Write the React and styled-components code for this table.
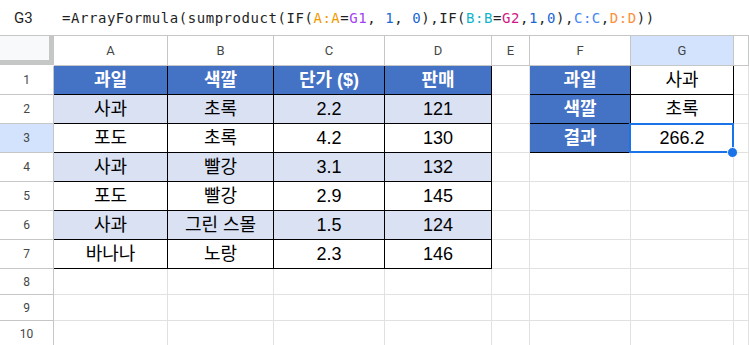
import React from 'react';
import styled, { createGlobalStyle, css } from 'styled-components';

const GlobalStyle = createGlobalStyle`
  html, body {
    margin: 0;
    padding: 0;
    background: #ffffff;
    overflow: hidden;
  }
`;

const Page = styled.div`
  width: 749px;
  height: 345px;
  overflow: hidden;
  font-family: "Liberation Sans", "Noto Sans CJK KR", Arial, sans-serif;
`;

const FormulaBar = styled.div`
  height: 35px;
  border-bottom: 1px solid #c4c7c5;
  display: flex;
  align-items: center;
  box-sizing: content-box;
`;

const NameBox = styled.div`
  width: 62px;
  padding-left: 14px;
  box-sizing: border-box;
  font-family: Roboto, "Liberation Sans", sans-serif;
  font-size: 15px;
  color: #1f1f1f;
`;

const Formula = styled.div`
  font-family: "DejaVu Sans Mono", "Liberation Mono", monospace;
  font-size: 14px;
  letter-spacing: 0.55px;
  color: #1f1f1f;
  white-space: pre;
`;

const Ref = styled.span`
  color: ${p => p.$c};
`;

const Grid = styled.div`
  display: grid;
  grid-template-columns: 54px 114px 106px 111px 107px 38px 101px 103px 1fr;
  grid-template-rows: 30px repeat(7, 29px) repeat(3, 26px);
`;

const Corner = styled.div`
  background: #f8f9fa;
  border-right: 5px solid #c4c7c5;
  border-bottom: 5px solid #c4c7c5;
  margin-bottom: 1px;
  box-sizing: border-box;
  height: 29px;
`;

const HeaderCell = styled.div`
  display: flex;
  align-items: center;
  justify-content: center;
  box-sizing: border-box;
  border-right: 1px solid #c4c7c5;
  border-bottom: 1px solid #c4c7c5;
  background: ${p => (p.$active ? '#d3e3fd' : '#ffffff')};
  font-family: Roboto, "Liberation Sans", sans-serif;
  font-size: ${p => (p.$row ? '12px' : '13px')};
  color: #444746;
`;

const Cell = styled.div`
  position: relative;
  display: flex;
  align-items: center;
  justify-content: center;
  box-sizing: border-box;
  border-right: 1px solid ${p => (p.$edgeR ? '#000000' : '#e1e1e1')};
  border-bottom: 1px solid ${p => (p.$edgeB ? '#000000' : '#e1e1e1')};
  background: ${p => p.$bg || '#ffffff'};
  font-size: 18px;
  line-height: 20px;
  color: #000000;
  white-space: nowrap;
  ${p => p.$head && css`
    color: #ffffff;
    font-weight: bold;
  `}
  ${p => p.$selected && css`
    &::after {
      content: '';
      position: absolute;
      top: -1px;
      left: -2px;
      right: -1px;
      bottom: -1px;
      border: 2px solid #1a73e8;
    }
  `}
`;

const Handle = styled.span`
  position: absolute;
  right: -5px;
  bottom: -6px;
  width: 9px;
  height: 9px;
  border-radius: 50%;
  background: #1a73e8;
  border: 1px solid #ffffff;
  z-index: 2;
`;

const BLUE = '#4472c4';
const BAND = '#d9e1f2';

const columns = ['A', 'B', 'C', 'D', 'E', 'F', 'G', ''];

const table = [
  ['과일', '색깔', '단가 ($)', '판매'],
  ['사과', '초록', '2.2', '121'],
  ['포도', '초록', '4.2', '130'],
  ['사과', '빨강', '3.1', '132'],
  ['포도', '빨강', '2.9', '145'],
  ['사과', '그린 스몰', '1.5', '124'],
  ['바나나', '노랑', '2.3', '146'],
];

const lookup = [
  ['과일', '사과'],
  ['색깔', '초록'],
  ['결과', '266.2'],
];

const App = () => {
  const rows = [];
  for (let r = 1; r <= 10; r++) {
    const data = table[r - 1];
    const look = lookup[r - 1];
    const inTable = !!data;
    const head = r === 1;
    const band = inTable && r % 2 === 0 ? BAND : undefined;

    rows.push(
      <HeaderCell key={`h${r}`} $row $active={r === 3}>{r}</HeaderCell>
    );
    for (let c = 0; c < 4; c++) {
      rows.push(
        <Cell
          key={`${r}-${c}`}
          $bg={head ? BLUE : band}
          $head={head}
          $edgeR={inTable}
          $edgeB={inTable}
        >
          {data ? data[c] : ''}
        </Cell>
      );
    }
    rows.push(<Cell key={`${r}-e`} />);
    rows.push(
      <Cell key={`${r}-f`} $bg={look ? BLUE : undefined} $head={!!look} $edgeR={!!look} $edgeB={!!look}>
        {look ? look[0] : ''}
      </Cell>
    );
    rows.push(
      <Cell key={`${r}-g`} $edgeR={!!look} $edgeB={!!look} $selected={r === 3}>
        {look ? look[1] : ''}
        {r === 3 && <Handle />}
      </Cell>
    );
    rows.push(<Cell key={`${r}-h`} />);
  }

  return (
    <Page>
      <GlobalStyle />
      <FormulaBar>
        <NameBox>G3</NameBox>
        <Formula>
          =ArrayFormula(sumproduct(IF(<Ref $c="#f29900">A:A</Ref>=<Ref $c="#a142f4">G1</Ref>, <Ref $c="#1967d2">1</Ref>, <Ref $c="#1967d2">0</Ref>),IF(<Ref $c="#12b5cb">B:B</Ref>=<Ref $c="#d01884">G2</Ref>,<Ref $c="#1967d2">1</Ref>,<Ref $c="#1967d2">0</Ref>),<Ref $c="#4285f4">C:C</Ref>,<Ref $c="#fa903e">D:D</Ref>))
        </Formula>
      </FormulaBar>
      <Grid>
        <Corner />
        {columns.map((col, i) => (
          <HeaderCell key={`c${i}`} $active={col === 'G'}>{col}</HeaderCell>
        ))}
        {rows}
      </Grid>
    </Page>
  );
};

export default App;
